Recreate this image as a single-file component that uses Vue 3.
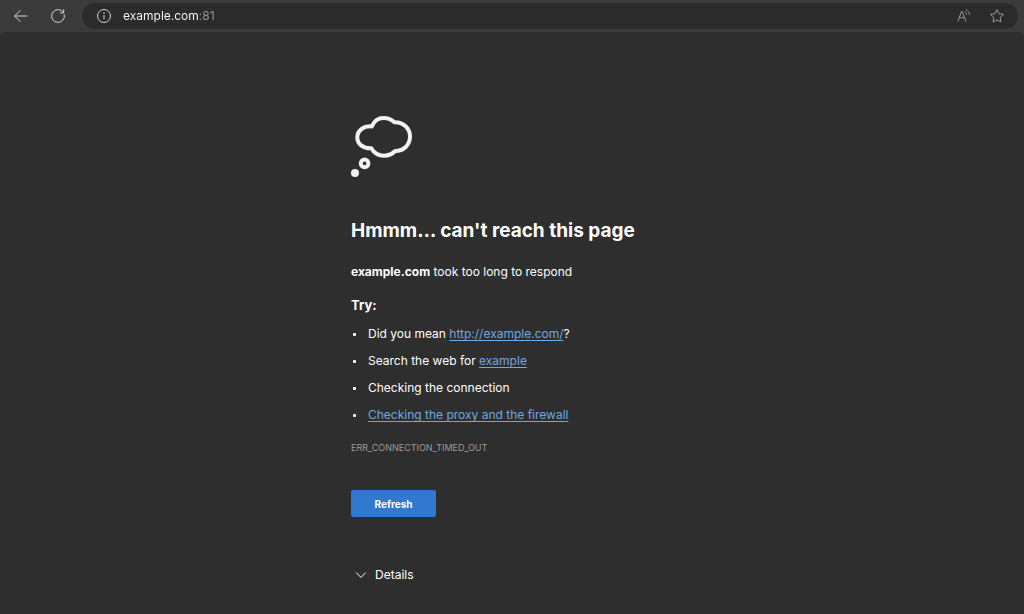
<script setup>
import { ref } from 'vue'

const address = ref('example.com:81')
const detailsOpen = ref(false)
</script>

<template>
  <div class="browser">
    <header class="toolbar">
      <button class="icon-button" type="button" aria-label="Back">
        <svg width="16" height="16" viewBox="0 0 16 16">
          <path d="M14.6 8H1.6M7.4 2.4L1.6 8l5.8 5.6" />
        </svg>
      </button>
      <button class="icon-button reload" type="button" aria-label="Reload">
        <svg width="16" height="16" viewBox="0 0 16 16">
          <path d="M14.2 6.4A6.4 6.4 0 1 1 11.6 2.7L13.6 4.8M13.7 1.2V4.9H10" />
        </svg>
      </button>
      <form class="address-bar" @submit.prevent>
        <button class="icon-button info" type="button" aria-label="Site information">
          <svg width="16" height="16" viewBox="0 0 16 16">
            <circle cx="8" cy="8" r="6.5" />
            <path d="M8 7.2v4" />
            <circle class="dot" cx="8" cy="5" r="0.8" />
          </svg>
        </button>
        <input v-model="address" class="address" type="text" aria-label="Address" spellcheck="false" />
        <button class="icon-button muted" type="button" aria-label="Read aloud">
          <svg width="16" height="16" viewBox="0 0 16 16">
            <path d="M1.8 13.4L5.6 3.4h.6L10 13.4M3.2 9.8h5.4M8.6 3.4c1.2.7 1.9 1.8 2 3.3M10 1.6c2.2 1 3.4 2.8 3.5 5.3" />
          </svg>
        </button>
        <button class="icon-button muted" type="button" aria-label="Add to favorites">
          <svg width="16" height="16" viewBox="0 0 16 16">
            <path d="M8 1.7l2 4 4.5.7-3.3 3.1.8 4.5L8 11.9 4 14l.8-4.5L1.5 6.4 6 5.7z" />
          </svg>
        </button>
      </form>
    </header>

    <main class="page">
      <div class="content">
        <svg class="cloud" width="64" height="64" viewBox="0 0 64 64" aria-hidden="true">
          <path
            d="M20.8 12.4C23 7 27.5 3.9 32.5 3.9C37 3.9 40.5 5.3 43.2 8.2C52 7.8 59 14.2 59 22.6C59 31 52.5 37 44.2 37C41 40.3 37.5 41.7 33 41.7C27.5 41.7 23 39 20.3 34.3C12 34.6 6.3 29.8 6.3 23.4C6.3 16.8 12.5 11.8 20.8 12.4Z"
          />
          <circle class="ring" cx="13.6" cy="49.4" r="3.8" />
          <circle class="drop" cx="4" cy="59" r="4" />
        </svg>
        <h1>Hmmm… can't reach this page</h1>
        <p class="summary"><strong>example.com</strong> took too long to respond</p>
        <h2>Try:</h2>
        <ul>
          <li>Did you mean <a href="#">http://example.com/</a>?</li>
          <li>Search the web for <a href="#">example</a></li>
          <li>Checking the connection</li>
          <li><a href="#">Checking the proxy and the firewall</a></li>
        </ul>
        <p class="code">ERR_CONNECTION_TIMED_OUT</p>
        <button class="refresh" type="button">Refresh</button>
        <button
          class="details"
          type="button"
          :aria-expanded="detailsOpen"
          @click="detailsOpen = !detailsOpen"
        >
          <svg width="12" height="12" viewBox="0 0 12 12" aria-hidden="true">
            <path d="M1.2 3.5L6 8.5l4.8-5" />
          </svg>
          Details
        </button>
      </div>
    </main>
  </div>
</template>

<style>
body {
  margin: 0;
  background: #2e2e2e;
}
</style>

<style scoped>
.browser {
  min-height: 100vh;
  display: flex;
  flex-direction: column;
  background: #3b3b3b;
  color: #fff;
  font-family: Inter, "Liberation Sans", sans-serif;
  font-size: 12px;
  line-height: 18px;
}

button,
input {
  font: inherit;
  color: inherit;
  border: 0;
  padding: 0;
  background: none;
}

button {
  cursor: pointer;
}

svg {
  display: block;
  fill: none;
  stroke: currentColor;
}

.toolbar {
  display: flex;
  align-items: center;
  height: 32px;
  padding: 0 6px 0 13px;
}

.icon-button {
  flex: none;
  color: #d4d4d4;
}

.reload {
  margin: 0 16px 0 21px;
}

.address-bar {
  flex: 1;
  display: flex;
  align-items: center;
  height: 26px;
  padding: 0 13px 0 14px;
  border-radius: 13px;
  background: #2b2b2b;
}

.address {
  flex: 1;
  min-width: 0;
  margin-left: 11px;
  outline: none;
  color: transparent;
  caret-color: #fff;
  background: linear-gradient(to right, #fff 75px, #999 75px);
  background-clip: text;
}

.dot {
  fill: currentColor;
  stroke: none;
}

.muted {
  color: #9a9a9a;
}

.muted + .muted {
  margin-left: 17px;
}

.page {
  flex: 1;
  padding: 82px 24px 28px;
  border-radius: 6px 6px 0 0;
  background: #2e2e2e;
}

.content {
  max-width: 322px;
  margin: 0 auto;
}

.cloud {
  color: #f2f2f2;
  stroke-width: 4;
  stroke-linejoin: round;
}

.drop {
  fill: currentColor;
  stroke: none;
}

h1 {
  margin: 39px 0 0;
  font-size: 19px;
  line-height: 28px;
  font-weight: 700;
}

.summary {
  margin: 18px 0 0;
}

h2 {
  margin: 15px 0 0;
  font-size: 13px;
  line-height: 18px;
  font-weight: 700;
}

ul {
  display: grid;
  gap: 9px;
  margin: 11px 0 0;
  padding: 0;
  list-style: none;
}

li {
  position: relative;
  padding-left: 17px;
}

li::before {
  content: "";
  position: absolute;
  left: 2px;
  top: 8px;
  width: 3px;
  height: 3px;
  border-radius: 1px;
  background: #fff;
}

a {
  color: #6ea8e0;
  text-decoration: underline 1px;
  text-decoration-skip-ink: none;
  text-underline-offset: 2px;
}

.code {
  margin: 17px 0 0;
  color: #9c9c9c;
  font-size: 9px;
  line-height: 14px;
}

.refresh {
  display: block;
  min-width: 85px;
  height: 27px;
  margin-top: 35px;
  padding: 0 20px;
  border-radius: 2px;
  background: #3078d0;
  font-size: 10px;
  font-weight: 700;
}

.details {
  display: flex;
  align-items: center;
  gap: 8px;
  margin-top: 49px;
  padding-left: 4px;
}
</style>
